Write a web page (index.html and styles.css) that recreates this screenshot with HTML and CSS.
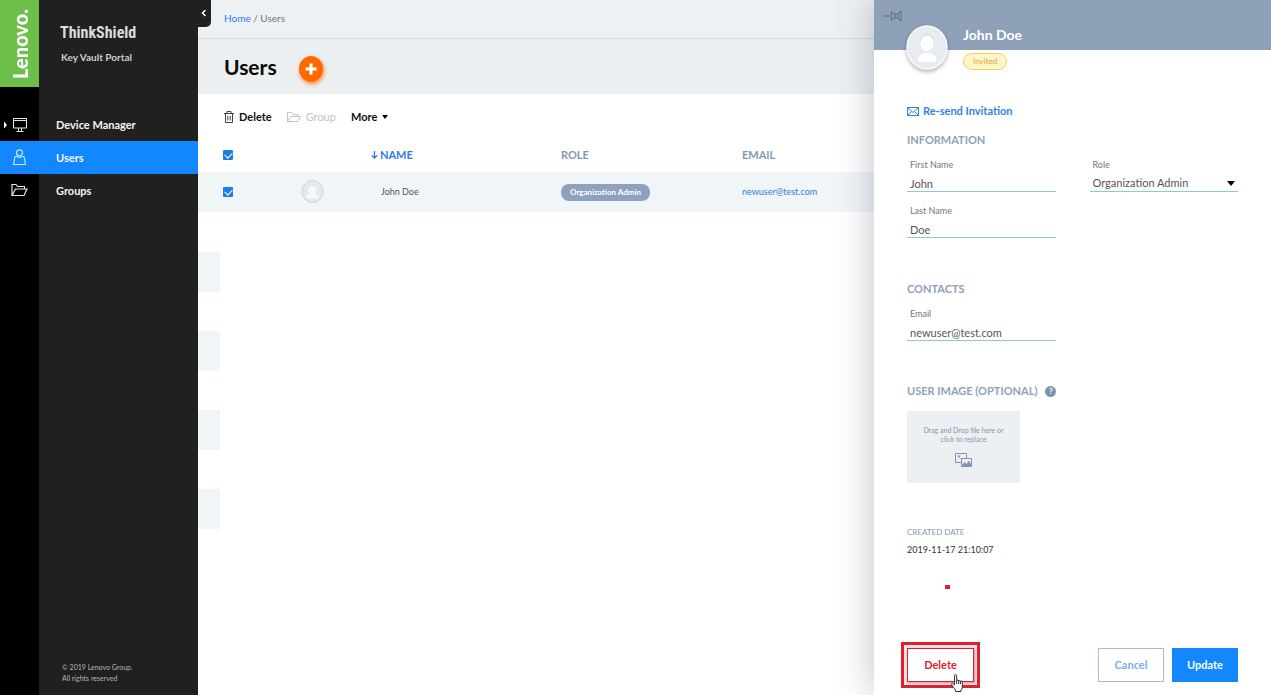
FILE: index.html
```html
<!DOCTYPE html>
<html lang="en">
<head>
<meta charset="utf-8">
<title>ThinkShield Key Vault Portal - Users</title>
<link rel="stylesheet" href="styles.css">
</head>
<body>
<div class="app">
  <aside class="sidebar">
    <div class="brand">
      <div class="lenovo"><span class="lenovo-name">Lenovo.</span></div>
      <div class="product">
        <div class="product-name">ThinkShield</div>
        <div class="product-sub">Key Vault Portal</div>
      </div>
    </div>
    <nav class="nav">
      <a class="nav-item" href="#devices">
        <span class="nav-icon"><svg width="36" height="18" viewBox="0 0 36 18" fill="none" stroke="#e4e4e4"><path d="M2 5.500l3 3.500-3 3.500z" fill="#fff" stroke="none"/><path d="M11.500 2.500h13v9.500h-13zM11.500 4.500h13M16.500 12v3M19.500 12v3M14.500 15.500h7"/></svg></span>
        <span>Device Manager</span>
      </a>
      <a class="nav-item active" href="#users">
        <span class="nav-icon"><svg width="36" height="18" viewBox="0 0 36 18" fill="none" stroke="#b9ecff" stroke-width="1.200"><circle cx="17.500" cy="3.800" r="3"/><path d="M15 7.500h-2l-1.500 8h12l-1.500-8h-2M15 7.500q2.500 2 5 0"/></svg></span>
        <span>Users</span>
      </a>
      <a class="nav-item" href="#groups">
        <span class="nav-icon"><svg width="36" height="18" viewBox="0 0 36 18" fill="none" stroke="#e4e4e4" stroke-width="1.200"><path d="M10 13.500v-11h4l1.500 2h7v2.500M10 13.500l3.500-6.500h11.500l-3 6.500z"/></svg></span>
        <span>Groups</span>
      </a>
    </nav>
    <p class="copyright">© 2019 Lenovo Group.<br>All rights reserved</p>
    <button class="collapse" aria-label="Collapse menu"><svg width="6" height="8" viewBox="0 0 6 8" fill="none" stroke="#fff" stroke-width="1.500"><path d="M4.500 0L1.500 3l3 3"/></svg></button>
  </aside>

  <main class="main">
    <div class="breadcrumb"><a href="#home">Home</a> / Users</div>
    <header class="page-head">
      <h1>Users</h1>
      <button class="add" aria-label="Add user"><svg width="12" height="12" viewBox="0 0 12 12" stroke="#fff" stroke-width="3"><path d="M6 0.500v11M0.500 6h11"/></svg></button>
    </header>
    <div class="toolbar">
      <button class="tool"><svg width="10" height="12" viewBox="0 0 10 12" fill="none" stroke="#444"><path d="M0 2.500h10M3 2.500v-2h4v2M1.500 3v8.500h7V3M3.800 5v4.500M6.200 5v4.500"/></svg>Delete</button>
      <button class="tool" disabled><svg width="14" height="12" viewBox="0 0 14 12" fill="none" stroke="#c4c4c4"><path d="M.5 10.500v-9h4l1.500 2h5v2M.5 10.500L3.500 5.500h10l-2.500 5z"/></svg>Group</button>
      <button class="tool">More<svg width="6" height="4" viewBox="0 0 6 4"><path d="M0 0h6L3 4z"/></svg></button>
    </div>
    <table class="users">
      <thead>
        <tr>
          <th class="col-check"><input type="checkbox" class="check" aria-label="Select all users" checked></th>
          <th class="col-avatar"></th>
          <th class="col-name sorted"><svg width="7" height="8" viewBox="0 0 7 8" fill="none" stroke="#2f7de1" stroke-width="1.300"><path d="M3.500 0v7M.8 4.300L3.500 7l2.700-2.700"/></svg>NAME</th>
          <th class="col-role">ROLE</th>
          <th>EMAIL</th>
        </tr>
      </thead>
      <tbody>
        <tr>
          <td><input type="checkbox" class="check" aria-label="Select John Doe" checked></td>
          <td><svg class="row-avatar" width="23" height="24" viewBox="0 0 23 24"><ellipse cx="11.500" cy="11.500" rx="10.500" ry="11" fill="#e6e9ec" stroke="#d0d3d8"/><path d="M5 18.500q0-4 4-4.500c-3-3-2-8 2.500-8s5.500 5 2.500 8q4 .5 4 4.500z" fill="#f7f8fa"/></svg></td>
          <td>John Doe</td>
          <td><span class="role-pill">Organization Admin</span></td>
          <td><a href="#mail">newuser@test.com</a></td>
        </tr>
      </tbody>
    </table>
    <div class="stripes"><span></span><span></span><span></span><span></span></div>
  </main>

  <section class="panel">
    <button class="pin" aria-label="Pin panel"><svg width="20" height="12" viewBox="0 0 20 12" fill="none" stroke="#64758d" stroke-width="1.200"><path d="M0 6h8M8.500 1v10M8.500 3h2l2 1h2.500l2-2.500h1v9h-1L15 8h-2.500l-2 1h-2M12 4v4M15 4v4"/></svg></button>
    <div class="profile">
      <svg class="profile-avatar" width="42" height="46" viewBox="0 0 42 46"><ellipse cx="21" cy="22.500" rx="20" ry="21.500" fill="#e8ebf0" stroke="#f8f9fb" stroke-width="1.500"/><path d="M14.500 17c0-5 2.500-8 6.500-8s6.500 3 6.500 8" fill="none" stroke="#d9dde3"/><ellipse cx="21" cy="18.500" rx="6.500" ry="7.500" fill="#fff"/><path d="M12 37v-3c0-4 3.500-5 6.500-6h5c3 1 6.500 2 6.500 6v3z" fill="#fff"/></svg>
      <div class="profile-text">
        <h2>John Doe</h2>
        <span class="status">Invited</span>
      </div>
    </div>
    <form class="details">
      <button type="button" class="resend"><svg width="12" height="9" viewBox="0 0 12 9" fill="none" stroke="#2b85e4"><path d="M.5.5h11v8H.5zM.5.5L6 5.500 11.500.5M.5 8.500l4-4M11.500 8.500l-4-4"/></svg>Re-send Invitation</button>
      <h3>INFORMATION</h3>
      <div class="fields info">
        <div class="field"><label for="first">First Name</label><input id="first" type="text" value="John"></div>
        <div class="field"><label for="role">Role</label>
          <div class="select"><select id="role"><option>Organization Admin</option></select><svg width="8" height="5" viewBox="0 0 8 5"><path d="M0 0h8L4 5z"/></svg></div></div>
        <div class="field"><label for="last">Last Name</label><input id="last" type="text" value="Doe"></div>
      </div>
      <h3>CONTACTS</h3>
      <div class="fields contacts">
        <div class="field"><label for="email">Email</label><input id="email" type="text" value="newuser@test.com"></div>
      </div>
      <h3>USER IMAGE (OPTIONAL) <span class="help">?</span></h3>
      <button type="button" class="drop">
        <span>Drag and Drop file here or<br>click to replace</span>
        <svg width="17" height="14" viewBox="0 0 17 14" fill="none" stroke="#8194b8"><path d="M6 9.500H.5v-9h11V5M6.500 5.500h10v8h-10z"/><path d="M2.500 3h3M3 3l2.500 2.500"/><path d="M7 12l2.500-3 2 2 2.500-3.500 2.500 4.500v1H7z" fill="#8194b8" stroke="none"/></svg>
      </button>
      <h4>CREATED DATE</h4>
      <p class="date">2019-11-17 21:10:07</p>
      <span class="marker"></span>
      <div class="actions">
        <div class="highlight">
          <button type="button" class="btn danger">Delete</button>
          <svg class="pointer" width="12" height="18" viewBox="0 0 12 18" fill="#fff" stroke="#333"><path d="M3.500 10.500V1.800q0-1.300 1.100-1.300t1.100 1.300V7q0-1 1-1t1 1v.5q0-1 .9-1t.9 1V8q0-1 .9-1t.9 1v5q0 2-1.300 3v1.500H4.500V16Q2.500 14 .7 10.800q-.4-1.300.7-1.500 1 0 2.100 2"/><path d="M5.700 7v3M7.700 7.500V10M9.500 8v2" /></svg>
        </div>
        <button type="button" class="btn cancel">Cancel</button>
        <button type="submit" class="btn primary">Update</button>
      </div>
    </form>
  </section>
</div>
</body>
</html>
```
FILE: styles.css
```css
* { box-sizing: border-box; }
body { margin: 0; font-family: Lato, "Open Sans", sans-serif; font-size: 11px; line-height: 14px; color: #555; background: #fff; }
h1, h2, h3, h4, p { margin: 0; }
a { text-decoration: none; color: #2f7de1; }
button { font: inherit; border: 0; padding: 0; background: none; cursor: pointer; }
svg { flex: none; display: block; }
.app { display: flex; min-height: 100vh; }

.sidebar { position: relative; z-index: 1; flex: 0 0 198px; display: flex; flex-direction: column; background: linear-gradient(to right, #000 39px, #202020 39px); color: #f4f4f4; }
.brand { display: flex; height: 108px; }
.lenovo { width: 39px; height: 87px; display: flex; align-items: center; justify-content: center; background: #6cc04a; }
.lenovo-name { writing-mode: vertical-rl; transform: rotate(180deg); font-size: 20px; line-height: 24px; font-weight: 900; color: #fff; }
.product { flex: 1; padding: 21px 0 0 21px; }
.product-name { font-family: "Roboto Condensed", "Liberation Sans Narrow", Roboto, sans-serif; font-weight: 700; font-size: 16px; line-height: 24px; color: #dcdcdc; }
.product-sub { margin-top: 5px; padding-left: 1px; font-size: 10px; font-weight: 700; color: #ccc; }
.nav-item { display: flex; align-items: center; height: 33px; color: #f4f4f4; font-weight: 700; }
.nav-item.active { background: #1287ff; }
.nav-icon { width: 56px; padding-left: 2px; }
.copyright { margin: auto 0 11px 62px; font-size: 7px; line-height: 11px; color: #b4b4b4; }
.collapse { position: absolute; left: 197px; top: 0; width: 14px; height: 27px; display: flex; align-items: center; justify-content: center; background: #202020; border-radius: 0 0 5px 0; }

.main { flex: 1; min-width: 0; }
.breadcrumb { height: 39px; padding: 11px 26px; font-size: 10px; color: #777; background: #edf1f3; border-bottom: 1px solid #d5dade; }
.page-head { display: flex; align-items: center; gap: 22px; height: 55px; padding: 0 26px; background: #ebeff1; }
h1 { font-size: 21px; line-height: 26px; font-weight: 700; color: #0a0a0a; }
.add { width: 24px; height: 26px; margin-top: 5px; display: flex; align-items: center; justify-content: center; border-radius: 50%; background: #ff6a00; box-shadow: 1px 2px 4px #ff8a3c; }
.toolbar { display: flex; align-items: center; gap: 15px; height: 44px; padding: 2px 26px 0; }
.tool { display: flex; align-items: center; gap: 5px; font-weight: 700; color: #111; }
.tool:disabled { color: #c4c4c4; font-weight: 400; }
.users { width: 100%; border-collapse: collapse; table-layout: fixed; text-align: left; }
.users th, .users td { padding: 0; vertical-align: middle; }
.users th { height: 34px; color: #8697b1; font-weight: 700; }
.users td { height: 40px; font-size: 9px; background: #f0f5f7; }
.users td:first-child, .users th:first-child { padding-left: 25px; }
.col-check { width: 103px; }
.col-avatar { width: 70px; }
.col-name { width: 190px; }
.col-role { width: 181px; }
.users .sorted { color: #2f7de1; }
.sorted svg { display: inline-block; margin-right: 2px; }
.users td:nth-child(3) { padding-left: 10px; }
.check { appearance: none; display: block; width: 10px; height: 10px; margin: 0; border-radius: 1px; background: #1a7fe8; position: relative; }
.check::after { content: ""; position: absolute; left: 3px; top: 1px; width: 4px; height: 6px; border: solid #fff; border-width: 0 1px 1px 0; transform: rotate(45deg); }
.role-pill { display: inline-block; padding: 1px 9px 2px; border-radius: 8px; background: #8fa1bf; color: #fff; font-size: 8px; line-height: 14px; font-weight: 700; }
.stripes { display: grid; gap: 39px; padding-top: 40px; }
.stripes span { width: 22px; height: 40px; background: #f0f5f7; }

.panel { position: relative; flex: 0 0 397px; display: flex; flex-direction: column; background: #fff; box-shadow: -4px 0 32px rgba(50, 60, 90, .25); }
.pin { position: absolute; left: 9px; top: 10px; }
.profile { display: flex; gap: 15px; padding: 25px 33px 0 32px; background: linear-gradient(#8fa1b9 50px, #fff 50px); }
.profile-avatar { filter: drop-shadow(0 2px 2px rgba(0, 0, 0, .3)); }
h2 { font-size: 14px; line-height: 20px; color: #fff; }
.status { display: inline-block; margin-top: 8px; padding: 0 9px; border: 1px solid #f5cb5c; border-radius: 9px; background: #fff5c8; color: #e8a33c; font-size: 8px; line-height: 15px; }
.details { flex: 1; display: flex; flex-direction: column; padding: 33px 33px 7px; }
.resend { display: flex; align-items: center; gap: 4px; align-self: flex-start; font-weight: 700; color: #2b85e4; }
h3 { display: flex; align-items: center; gap: 8px; margin-top: 15px; font-size: 11px; line-height: 14px; font-weight: 700; color: #8fa1b9; }
.fields { display: grid; grid-template-columns: 1fr 1fr; gap: 13px 34px; margin-top: 12px; }
.info { margin-bottom: 29px; }
.contacts { margin-bottom: 28px; }
.field { display: flex; flex-direction: column; }
.field label { padding-left: 3px; font-size: 9px; line-height: 12px; color: #777; }
.field input, .field select { appearance: none; width: 100%; height: 21px; padding: 4px 3px 0; border: 0; border-bottom: 1px solid #8fc3ea; border-radius: 0; outline: 0; background: none; font: inherit; line-height: 16px; color: #555; }
.select { display: flex; align-items: center; }
.select svg { margin: 4px 3px 0 -11px; }
.help { width: 11px; height: 11px; border-radius: 50%; background: #7f93b0; color: #fff; font-size: 8px; line-height: 11px; text-align: center; }
.drop { display: flex; flex-direction: column; align-items: center; gap: 9px; width: 113px; height: 72px; margin-top: 13px; padding-top: 15px; background: #ecf0f2; font-size: 7px; line-height: 9px; color: #8697b1; }
h4 { margin-top: 43px; font-size: 8px; line-height: 12px; font-weight: 400; color: #8697b1; }
.date { margin-top: 5px; font-size: 9px; color: #333; }
.marker { width: 5px; height: 4px; margin: 28px 0 0 38px; background: #d9232e; }
.actions { display: flex; align-items: center; gap: 8px; margin-top: auto; margin-left: -6px; }
.highlight { position: relative; margin-right: auto; padding: 3px; border: 3px solid #d9232e; background: #fbdfe2; }
.btn { width: 66px; height: 34px; font-weight: 700; }
.danger { display: block; width: 67px; border: 1px solid #c8283a; background: #fff; color: #d9232e; box-shadow: 1px 1px 2px #d98d94; }
.cancel { border: 1px solid #a5bdd6; color: #79b0ee; }
.primary { background: #1287ff; color: #fff; }
.pointer { position: absolute; left: 47px; top: 29px; }
```
